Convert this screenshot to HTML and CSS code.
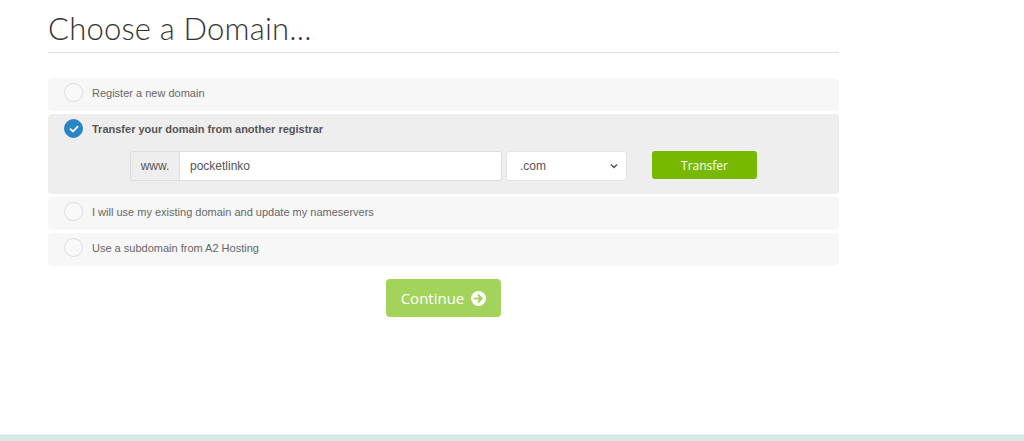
FILE: index.html
```html
<!DOCTYPE html>
<html lang="en">
<head>
    <meta charset="UTF-8">
    <meta name="viewport" content="width=device-width, initial-scale=1.0">
    <title>Choose a Domain</title>
    <link rel="stylesheet" href="styles.css">
</head>
<body>
    <div class="page">
        <h1 class="title">Choose a Domain...</h1>

        <div class="options">
            <div class="option">
                <span class="radio"></span>
                <span class="label">Register a new domain</span>
            </div>

            <div class="option active">
                <div class="option-head">
                    <span class="radio checked">
                        <svg width="10" height="8" viewBox="0 0 10 8"><path d="M1.5 4.2 L4 6.5 L8.6 1.6" fill="none" stroke="#fff" stroke-width="1.8" stroke-linecap="round" stroke-linejoin="round"/></svg>
                    </span>
                    <span class="label bold">Transfer your domain from another registrar</span>
                </div>
                <div class="domain-form">
                    <div class="input-group">
                        <span class="addon">www.</span>
                        <span class="input">pocketlinko</span>
                    </div>
                    <div class="select">
                        <span>.com</span>
                        <svg width="8" height="6" viewBox="0 0 8 6"><path d="M1 1.5 L4 4.5 L7 1.5" fill="none" stroke="#555" stroke-width="1.5"/></svg>
                    </div>
                    <button class="btn-transfer">Transfer</button>
                </div>
            </div>

            <div class="option">
                <span class="radio"></span>
                <span class="label">I will use my existing domain and update my nameservers</span>
            </div>

            <div class="option">
                <span class="radio"></span>
                <span class="label">Use a subdomain from A2 Hosting</span>
            </div>
        </div>

        <div class="actions">
            <button class="btn-continue">
                Continue
                <svg width="15" height="15" viewBox="0 0 16 16"><circle cx="8" cy="8" r="8" fill="#fff"/><path d="M4 8 H11 M8 4.6 L11.4 8 L8 11.4" fill="none" stroke="#a3d35a" stroke-width="2.2" stroke-linecap="round" stroke-linejoin="round"/></svg>
            </button>
        </div>
    </div>

    <div class="footer-band"></div>
</body>
</html>
```

FILE: styles.css
```css
*{
    padding: 0;
    margin: 0;
    box-sizing: border-box;
}
html, body{
    height: 100%;
}
body{
    font-family: "Liberation Sans", Arial, sans-serif;
    color: #555;
    background: #fff;
    display: flex;
    flex-direction: column;
}
.page{
    width: 791px;
    margin-left: 48px;
    flex: 1;
}
/* 标题 */
.title{
    font-family: Lato, "Open Sans", sans-serif;
    font-weight: 300;
    font-size: 31px;
    color: #333;
    padding-top: 12px;
    padding-bottom: 8px;
    line-height: 32px;
    border-bottom: 1px solid #ddd;
    letter-spacing: 0.2px;
}
/* 选项列表 */
.options{
    margin-top: 25px;
    display: flex;
    flex-direction: column;
    gap: 3px;
}
.option{
    background: #f7f7f7;
    border-radius: 4px;
    height: 33px;
    display: flex;
    align-items: center;
    padding-left: 16px;
    padding-bottom: 4px;
}
.option.active{
    background: #eeeeee;
    height: 80px;
    display: block;
    padding-top: 5px;
    padding-bottom: 0;
}
.option-head{
    display: flex;
    align-items: center;
}
.radio{
    width: 19px;
    height: 19px;
    border-radius: 50%;
    border: 1px solid #ddd;
    background: #f9f9f9;
    margin-right: 9px;
    flex-shrink: 0;
    display: flex;
    align-items: center;
    justify-content: center;
}
.radio.checked{
    background: #2a85c6;
    border-color: #2a85c6;
}
.label{
    font-size: 11px;
    color: #666;
}
.label.bold{
    font-weight: bold;
    color: #555;
}
/* 域名输入 */
.domain-form{
    display: flex;
    align-items: center;
    margin-top: 13px;
    margin-left: 66px;
}
.input-group{
    display: flex;
    height: 30px;
    border: 1px solid #ddd;
    border-radius: 3px;
    width: 372px;
    overflow: hidden;
}
.addon{
    width: 49px;
    background: #eee;
    border-right: 1px solid #ddd;
    font-size: 12px;
    color: #555;
    display: flex;
    align-items: center;
    justify-content: center;
}
.input{
    flex: 1;
    background: #fff;
    font-size: 12px;
    color: #555;
    display: flex;
    align-items: center;
    padding-left: 10px;
}
.select{
    width: 121px;
    height: 30px;
    margin-left: 4px;
    background: #fff;
    border: 1px solid #e4e4e4;
    border-radius: 3px;
    display: flex;
    align-items: center;
    justify-content: space-between;
    padding: 0 8px 0 13px;
    font-size: 12px;
    color: #555;
}
.btn-transfer{
    margin-left: 25px;
    width: 105px;
    height: 28px;
    margin-bottom: 2px;
    background: #76b900;
    border: none;
    border-radius: 3px;
    color: #fff;
    font-family: "Open Sans", sans-serif;
    font-size: 12px;
}
/* 继续按钮 */
.actions{
    display: flex;
    justify-content: center;
    margin-top: 13px;
}
.btn-continue{
    width: 115px;
    height: 38px;
    background: #a3d35a;
    border: none;
    border-radius: 4px;
    color: #fff;
    font-family: "Open Sans", sans-serif;
    font-size: 15px;
    display: flex;
    align-items: center;
    justify-content: center;
    gap: 7px;
}
.footer-band{
    height: 7px;
    background: #d9e7e7;
    border-top: 1px solid #e6efef;
}
```
